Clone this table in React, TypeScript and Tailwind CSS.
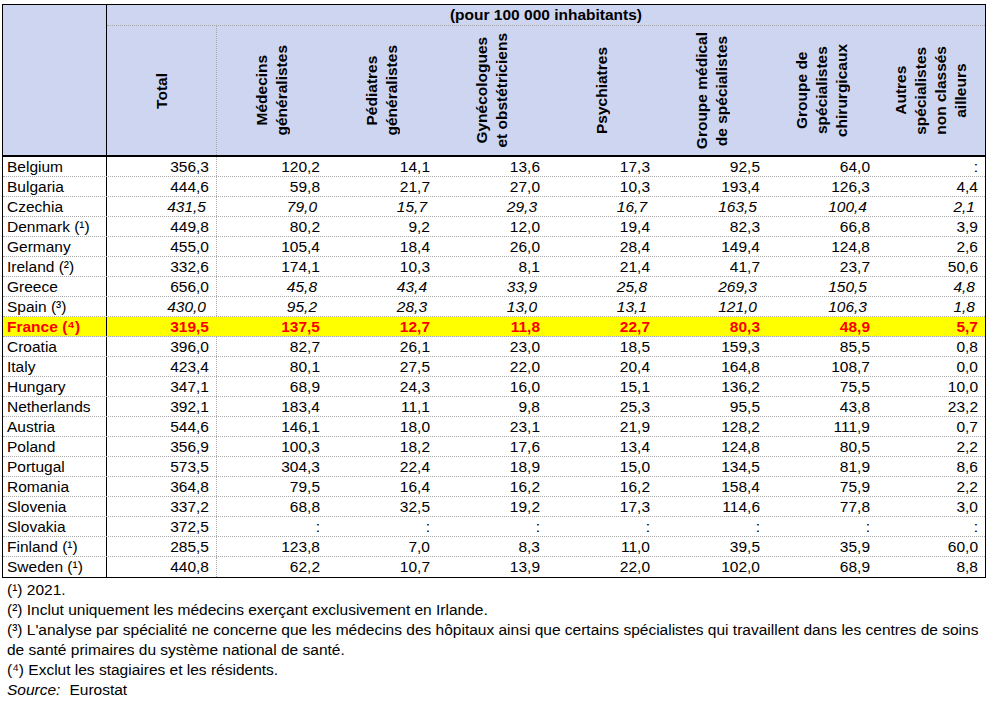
import React from "react";

type Row = {
  name: string;
  values: string[];
  italic?: boolean[] | boolean;
  highlight?: boolean;
};

const HEADERS: string[][] = [
  ["Total"],
  ["Médecins", "généralistes"],
  ["Pédiatres", "généralistes"],
  ["Gynécologues", "et obstétriciens"],
  ["Psychiatres"],
  ["Groupe médical", "de spécialistes"],
  ["Groupe de", "spécialistes", "chirurgicaux"],
  ["Autres", "spécialistes", "non classés", "ailleurs"],
];

const ROWS: Row[] = [
  { name: "Belgium", values: ["356,3", "120,2", "14,1", "13,6", "17,3", "92,5", "64,0", ":"] },
  { name: "Bulgaria", values: ["444,6", "59,8", "21,7", "27,0", "10,3", "193,4", "126,3", "4,4"] },
  { name: "Czechia", values: ["431,5", "79,0", "15,7", "29,3", "16,7", "163,5", "100,4", "2,1"], italic: true },
  { name: "Denmark (¹)", values: ["449,8", "80,2", "9,2", "12,0", "19,4", "82,3", "66,8", "3,9"] },
  { name: "Germany", values: ["455,0", "105,4", "18,4", "26,0", "28,4", "149,4", "124,8", "2,6"] },
  { name: "Ireland (²)", values: ["332,6", "174,1", "10,3", "8,1", "21,4", "41,7", "23,7", "50,6"] },
  {
    name: "Greece",
    values: ["656,0", "45,8", "43,4", "33,9", "25,8", "269,3", "150,5", "4,8"],
    italic: [false, true, true, true, true, true, true, true],
  },
  { name: "Spain (³)", values: ["430,0", "95,2", "28,3", "13,0", "13,1", "121,0", "106,3", "1,8"], italic: true },
  { name: "France (⁴)", values: ["319,5", "137,5", "12,7", "11,8", "22,7", "80,3", "48,9", "5,7"], highlight: true },
  { name: "Croatia", values: ["396,0", "82,7", "26,1", "23,0", "18,5", "159,3", "85,5", "0,8"] },
  { name: "Italy", values: ["423,4", "80,1", "27,5", "22,0", "20,4", "164,8", "108,7", "0,0"] },
  { name: "Hungary", values: ["347,1", "68,9", "24,3", "16,0", "15,1", "136,2", "75,5", "10,0"] },
  { name: "Netherlands", values: ["392,1", "183,4", "11,1", "9,8", "25,3", "95,5", "43,8", "23,2"] },
  { name: "Austria", values: ["544,6", "146,1", "18,0", "23,1", "21,9", "128,2", "111,9", "0,7"] },
  { name: "Poland", values: ["356,9", "100,3", "18,2", "17,6", "13,4", "124,8", "80,5", "2,2"] },
  { name: "Portugal", values: ["573,5", "304,3", "22,4", "18,9", "15,0", "134,5", "81,9", "8,6"] },
  { name: "Romania", values: ["364,8", "79,5", "16,4", "16,2", "16,2", "158,4", "75,9", "2,2"] },
  { name: "Slovenia", values: ["337,2", "68,8", "32,5", "19,2", "17,3", "114,6", "77,8", "3,0"] },
  { name: "Slovakia", values: ["372,5", ":", ":", ":", ":", ":", ":", ":"] },
  { name: "Finland (¹)", values: ["285,5", "123,8", "7,0", "8,3", "11,0", "39,5", "35,9", "60,0"] },
  { name: "Sweden (¹)", values: ["440,8", "62,2", "10,7", "13,9", "22,0", "102,0", "68,9", "8,8"] },
];

const isItalic = (row: Row, i: number) =>
  Array.isArray(row.italic) ? row.italic[i] : !!row.italic;

// only the Total column carries a dotted divider on its right
const colClass = (i: number, highlight?: boolean) => {
  if (i === 0) {
    return highlight
      ? "w-[110px] shrink-0 border-r border-dotted border-[#ffff00]"
      : "w-[110px] shrink-0 border-r border-dotted border-[#a8a8a8]";
  }
  if (i < 7) return "w-[110px] shrink-0";
  return "flex-1";
};

const DataRow = ({ row, last }: { row: Row; last: boolean }) => (
  <div
    className={`flex h-[20px] leading-[19px] ${
      last ? "" : "border-b border-dotted border-[#a8a8a8]"
    } ${row.highlight ? "bg-[#ffff00] text-[#ff0000] font-bold" : ""}`}
  >
    <div className="w-[104px] shrink-0 border-r border-black pl-[4px] whitespace-nowrap">
      {row.name}
    </div>
    {row.values.map((v, i) => (
      <div
        key={i}
        className={`text-right whitespace-nowrap ${colClass(i, row.highlight)} ${
          isItalic(row, i) ? "italic pr-[10px]" : "pr-[7px]"
        }`}
      >
        {v}
      </div>
    ))}
  </div>
);

export default function App() {
  return (
    <div className="w-[993px] h-[703px] bg-white pl-[2px] pt-[4px] text-black text-[15.5px] font-['Liberation_Sans',Arial,sans-serif]">
      <div className="w-[984px] border border-black">
        {/* header */}
        <div className="flex bg-[#cdd5f1] border-b-2 border-black">
          <div className="w-[104px] shrink-0 border-r border-black" />
          <div className="flex-1 flex flex-col">
            <div className="h-[21px] leading-[20px] text-center font-bold border-b border-dotted border-[#a8a8a8]">
              (pour 100 000 inhabitants)
            </div>
            <div className="flex h-[129px]">
              {HEADERS.map((lines, i) => (
                <div
                  key={i}
                  className={`flex items-center justify-center font-bold ${colClass(i)}`}
                >
                  <span className="[writing-mode:vertical-rl] rotate-180 text-center leading-[20px] whitespace-nowrap">
                    {lines.map((l, j) => (
                      <React.Fragment key={j}>
                        {j > 0 && <br />}
                        {l}
                      </React.Fragment>
                    ))}
                  </span>
                </div>
              ))}
            </div>
          </div>
        </div>

        {/* body */}
        {ROWS.map((row, i) => (
          <DataRow key={row.name} row={row} last={i === ROWS.length - 1} />
        ))}
      </div>

      {/* notes */}
      <div className="mt-[2px] pl-[5px] leading-[20px]">
        <p>(¹) 2021.</p>
        <p>(²) Inclut uniquement les médecins exerçant exclusivement en Irlande.</p>
        <p>
          (³) L'analyse par spécialité ne concerne que les médecins des hôpitaux ainsi que certains
          spécialistes qui travaillent dans les centres de soins
          <br />
          de santé primaires du système national de santé.
        </p>
        <p>(⁴) Exclut les stagiaires et les résidents.</p>
        <p>
          <i>Source:</i>
          <span className="pl-[9px]">Eurostat</span>
        </p>
      </div>
    </div>
  );
}
